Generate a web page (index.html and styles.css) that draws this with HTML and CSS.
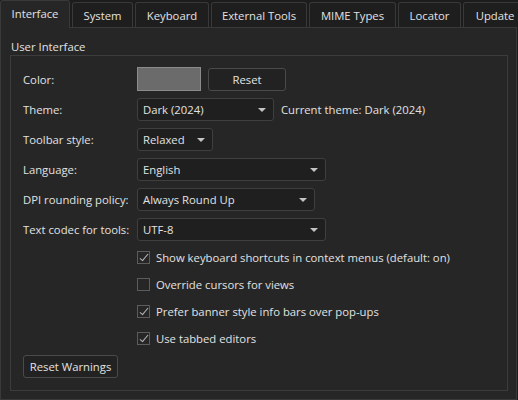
FILE: index.html
```html
<!DOCTYPE html>
<html>
<head>
<meta charset="utf-8">
<link rel="stylesheet" href="styles.css">
</head>
<body>
<div class="window">
  <div class="tabbar">
    <div class="tab active t-interface">Interface</div>
    <div class="tab t-system">System</div>
    <div class="tab t-keyboard">Keyboard</div>
    <div class="tab t-external">External Tools</div>
    <div class="tab t-mime">MIME Types</div>
    <div class="tab t-locator">Locator</div>
    <div class="tab t-update">Update</div>
  </div>
  <div class="panel">
    <div class="group-title">User Interface</div>
    <div class="group">
      <div class="form">
        <div class="label">Color:</div>
        <div class="field">
          <div class="swatch"></div>
          <div class="button reset">Reset</div>
        </div>

        <div class="label">Theme:</div>
        <div class="field">
          <div class="combo w-theme"><span>Dark (2024)</span><i class="arrow"></i></div>
          <span class="note">Current theme: Dark (2024)</span>
        </div>

        <div class="label">Toolbar style:</div>
        <div class="field">
          <div class="combo w-toolbar"><span>Relaxed</span><i class="arrow"></i></div>
        </div>

        <div class="label">Language:</div>
        <div class="field">
          <div class="combo w-lang"><span>English</span><i class="arrow"></i></div>
        </div>

        <div class="label">DPI rounding policy:</div>
        <div class="field">
          <div class="combo w-dpi"><span>Always Round Up</span><i class="arrow"></i></div>
        </div>

        <div class="label">Text codec for tools:</div>
        <div class="field">
          <div class="combo w-lang"><span>UTF-8</span><i class="arrow"></i></div>
        </div>
      </div>

      <div class="checks">
        <div class="check"><span class="box checked"></span>Show keyboard shortcuts in context menus (default: on)</div>
        <div class="check"><span class="box"></span>Override cursors for views</div>
        <div class="check"><span class="box checked"></span>Prefer banner style info bars over pop-ups</div>
        <div class="check"><span class="box checked"></span>Use tabbed editors</div>
      </div>

      <div class="button warnings">Reset Warnings</div>
    </div>
  </div>
</div>
</body>
</html>
```
FILE: styles.css
```css
* { box-sizing: border-box; }
html, body {
  margin: 0;
  padding: 0;
  background: #1c1c1c;
  width: 518px;
  height: 400px;
  overflow: hidden;
}
body {
  font-family: "Open Sans", "Noto Sans", sans-serif;
  font-size: 11.3px;
  color: #e2e2e2;
}
.window {
  width: 518px;
  height: 400px;
}
.tabbar {
  display: flex;
  gap: 2px;
  height: 27px;
  align-items: flex-end;
  position: relative;
  z-index: 1;
}
.tab {
  height: 25px;
  background: #1e1e1e;
  border: 1px solid #393939;
  border-bottom: none;
  border-radius: 3px 3px 0 0;
  display: flex;
  align-items: center;
  justify-content: center;
  white-space: nowrap;
  flex: none;
}
.tab.active {
  height: 28px;
  background: #262626;
  margin-bottom: -1px;
  padding-bottom: 2px;
}
.t-interface { width: 70px; }
.t-system { width: 61px; }
.t-keyboard { width: 74px; }
.t-external { width: 96px; }
.t-mime { width: 87px; }
.t-locator { width: 63px; }
.t-update { width: 64px; }

.panel {
  width: 517px;
  height: 373px;
  background: #262626;
  border: 1px solid #393939;
  padding: 11px 9px 0 9px;
}
.group-title {
  line-height: 16px;
  height: 16px;
  padding-left: 1px;
}
.group {
  width: 498px;
  height: 336px;
  border: 1px solid #3c3c3c;
  padding: 11px 11px 0 12px;
}
.form {
  display: grid;
  grid-template-columns: 114px auto;
  row-gap: 7px;
  align-items: center;
}
.label {
  white-space: nowrap;
}
.field {
  display: flex;
  align-items: center;
  gap: 7px;
}
.swatch {
  width: 64px;
  height: 24px;
  background: #6b6b6b;
  border: 1px solid #8b8b8b;
}
.button {
  background: #222222;
  border: 1px solid #4a4a4a;
  border-radius: 3px;
  display: flex;
  align-items: center;
  justify-content: center;
  white-space: nowrap;
}
.reset {
  width: 78px;
  height: 23px;
}
.combo {
  height: 23px;
  background: #1f1f1f;
  border: 1px solid #3f3f3f;
  border-radius: 3px;
  display: flex;
  align-items: center;
  justify-content: space-between;
  padding: 0 7px 0 5px;
}
.arrow {
  width: 0;
  height: 0;
  border-left: 4px solid transparent;
  border-right: 4px solid transparent;
  border-top: 4px solid #c4c4c4;
}
.w-theme { width: 137px; }
.w-toolbar { width: 76px; }
.w-lang { width: 189px; }
.w-dpi { width: 178px; }
.note { white-space: nowrap; }

.checks {
  display: flex;
  flex-direction: column;
  gap: 7px;
  margin-top: 6px;
  padding-left: 114px;
}
.check {
  height: 20px;
  display: flex;
  align-items: center;
  gap: 6px;
  white-space: nowrap;
}
.box {
  width: 13px;
  height: 13px;
  border: 1px solid #5c5c5c;
  background: #262626;
  position: relative;
  flex: none;
}
.box.checked::after {
  content: "";
  position: absolute;
  left: 3.5px;
  top: 0.5px;
  width: 3px;
  height: 8px;
  border-right: 1.5px solid #b8b8b8;
  border-bottom: 1.5px solid #b8b8b8;
  transform: rotate(40deg);
}
.warnings {
  width: 95px;
  height: 23px;
  margin-top: 7px;
}
```
